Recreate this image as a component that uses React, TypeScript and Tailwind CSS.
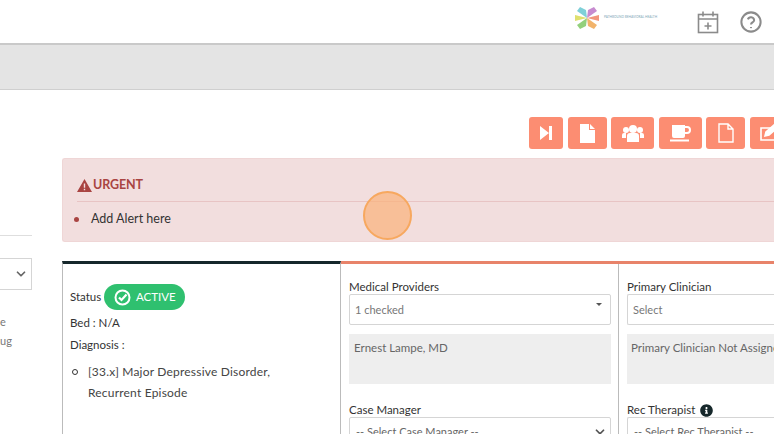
import { ChevronDown } from "lucide-react";
import { FaInfoCircle } from "react-icons/fa";

function Btn({ w, children }: { w: string; children: React.ReactNode }) {
  return <div className={`${w} h-[32px] shrink-0 rounded-[3px] bg-[#fc8d72] flex items-center justify-center`}>{children}</div>;
}

export default function App() {
  return (
    <div className="w-[774px] h-[434px] overflow-hidden bg-white font-['Lato','Liberation_Sans',sans-serif] text-[11.5px] text-[#333]">
      <header className="h-[45px] bg-white border-b-2 border-[#c9c9c9] flex items-center justify-end">
        <svg width="24" height="24" viewBox="0 0 24 24" className="mr-[5px] mb-[7px]">
          <path d="M12 12 L2 5 L5 1 L11 4Z" fill="#7fd0d8" />
          <path d="M12 12 L22 5 L19 1 L13 4Z" fill="#c78bd0" />
          <path d="M12 12 L0 9 L0 15Z" fill="#dfe06e" />
          <path d="M12 12 L24 9 L24 15Z" fill="#f2967d" />
          <path d="M12 12 L2 19 L5 23 L11 20Z" fill="#93d07c" />
          <path d="M12 12 L22 19 L19 23 L13 20Z" fill="#f2b36b" />
        </svg>
        <span className="w-[54px] mb-[7px] text-[3.2px] leading-none text-[#7fa8b8] whitespace-nowrap">PATHBOUND BEHAVIORAL HEALTH</span>
        <svg width="24" height="24" viewBox="0 0 24 24" fill="none" stroke="#8b8b8b" strokeWidth="1.6" className="ml-[38px]">
          <rect x="2.5" y="4.5" width="19" height="18" />
          <path d="M2.5 9h19M7 1.5v5M17 1.5v5M12 12.5v7M8.5 16h7" />
        </svg>
        <svg width="22" height="22" viewBox="0 0 24 24" fill="none" stroke="#8b8b8b" strokeWidth="2.2" className="ml-[20px] mr-[12px]">
          <circle cx="12" cy="12" r="10.5" />
          <path d="M8.6 9.2a3.5 3.5 0 0 1 6.8.8c0 2.3-3.4 2.6-3.4 4.6" />
          <path d="M12 17.5v1.2" />
        </svg>
      </header>
      <div className="h-[45px] bg-[#e4e4e4] border-b border-[#cfcfcf]" />
      <main className="relative flex">
        <aside className="w-[62px] shrink-0 pt-[145px]">
          <div className="w-[32px] border-t border-[#dedede]" />
          <div className="mt-[22px] w-[32px] h-[32px] border border-[#d5d5d5] border-l-0 flex items-center justify-end pr-[3px]">
            <ChevronDown size={14} strokeWidth={3} className="text-[#666]" />
          </div>
          <div className="mt-[22px] text-[11px] leading-[19px] text-[#777]">
            <div>e</div>
            <div>ug</div>
          </div>
        </aside>
        <div className="w-[712px] shrink-0">
          <div className="h-[68px] pt-[27px] flex gap-[4.5px] pl-[467px]">
            <Btn w="w-[34px]">
              <svg width="14" height="16" viewBox="0 0 14 16" fill="#fff"><path d="M1 1l9 7-9 7zM10 1h3v14h-3z" /></svg>
            </Btn>
            <Btn w="w-[39px]">
              <svg width="15" height="19" viewBox="0 0 15 19" fill="#fff"><path d="M0 0h9v6h6v13H0zM10 0l5 5h-5z" /></svg>
            </Btn>
            <Btn w="w-[43px]">
              <svg width="22" height="18" viewBox="0 0 22 18" fill="#fff">
                <circle cx="11" cy="5" r="4" /><circle cx="4" cy="6" r="3" /><circle cx="18" cy="6" r="3" />
                <path d="M5 18v-6a3 3 0 0 1 3-3h6a3 3 0 0 1 3 3v6zM0 14v-3a2 2 0 0 1 2-2h2v5zM22 14v-3a2 2 0 0 0-2-2h-2v5z" />
              </svg>
            </Btn>
            <Btn w="w-[43px]">
              <svg width="22" height="18" viewBox="0 0 22 18" fill="#fff">
                <path d="M3 1h13v1h2a4 4 0 0 1 0 8h-2v2a2 2 0 0 1-2 2H5a2 2 0 0 1-2-2zM16 4v4h2a2 2 0 0 0 0-4z" fillRule="evenodd" />
                <rect x="1" y="15.5" width="19" height="2" />
              </svg>
            </Btn>
            <Btn w="w-[39px]">
              <svg width="16" height="20" viewBox="0 0 16 20" fill="none" stroke="#fff" strokeWidth="1.4"><path d="M1 1h9l5 5v13H1zM10 1v5h5" /></svg>
            </Btn>
            <Btn w="w-[39px]">
              <svg width="20" height="18" viewBox="0 0 20 18" fill="none" stroke="#fff" strokeWidth="1.6"><path d="M16 12v4H2V4h11" /><path d="M6 12l1-4 8-7 3 3-8 7z" fill="#fff" /></svg>
            </Btn>
          </div>
          <section className="h-[84px] rounded-l-[3px] bg-[#f2dede] pl-[14px] pt-[17px] border border-r-0 border-[#efd6d6]">
            <div className="flex items-center gap-[1px] pb-[7px] border-b border-[#e8c4c4] text-[#a94442] font-bold text-[12.5px] leading-[18px] tracking-[-0.1px]">
              <svg width="15" height="13" viewBox="0 0 15 13" fill="#a94442"><path fillRule="evenodd" d="M7.5 0L15 13H0zM6.8 4.5v4.3h1.4V4.5zM6.8 9.8v1.4h1.4V9.8z" /></svg>
              URGENT
            </div>
            <div className="mt-[8px] flex items-center text-[12.5px] leading-[18px] text-[#333]">
              <span className="w-[5px] h-[5px] -ml-[3px] rounded-full bg-[#a94442]" />
              <span className="ml-[12px]">Add Alert here</span>
            </div>
          </section>
          <section className="mt-[19px] flex h-[200px]">
            <div className="w-[279px] shrink-0 border-t-[3px] border-x border-t-[#16282b] border-x-[#bbb] pl-[7px] pt-[20px]">
              <div className="flex items-center gap-[3px] h-[26px]">
                <span>Status</span>
                <span className="w-[81px] h-[26px] rounded-full bg-[#2fc06f] text-white flex items-center justify-center gap-[5px]">
                  <svg width="17" height="17" viewBox="0 0 17 17" fill="none">
                    <circle cx="8.5" cy="8.5" r="7" stroke="#fff" strokeWidth="2" />
                    <path d="M5 8.5l2.5 2.5 5-5.5" stroke="#fff" strokeWidth="2.2" />
                  </svg>
                  ACTIVE
                </span>
              </div>
              <div className="mt-[3px] leading-[20px] text-[11.5px]">Bed : N/A</div>
              <div className="mt-[2px] leading-[20px]">Diagnosis :</div>
              <div className="mt-[6px] flex text-[12px] leading-[21px] tracking-[0.2px] text-[#444]">
                <span className="mt-[8px] ml-[2px] w-[6px] h-[6px] rounded-full border border-[#333] shrink-0" />
                <span className="ml-[10px]">[33.x] Major Depressive Disorder,<br />Recurrent Episode</span>
              </div>
            </div>
            <div className="flex-1 border-t-[3px] border-t-[#e8836a] flex min-w-0">
              <div className="w-[278px] shrink-0 border-r border-[#bbb] pl-[8px] pr-[7px] pt-[15px]">
                <label className="block leading-[16px]">Medical Providers</label>
                <div className="mt-[-1px] h-[31px] border border-[#d5d5d5] rounded-[2px] pl-[5px] pr-[8px] pt-[7px] flex items-start justify-between text-[#777] text-[11px] leading-[16px]">
                  1 checked
                  <span className="mt-[1px] border-x-[3px] border-x-transparent border-t-[3px] border-t-[#555]" />
                </div>
                <div className="mt-[9px] h-[50px] bg-[#eee] pl-[5px] pt-[6px] text-[#666] leading-[16px]">Ernest Lampe, MD</div>
                <label className="block mt-[18px] leading-[16px]">Case Manager</label>
                <div className="mt-[-1px] h-[31px] border border-[#d5d5d5] rounded-[2px] pl-[6px] pr-[3px] flex items-start pt-[6px] justify-between text-[#666] text-[11px] leading-[16px]">
                  <span className="whitespace-pre">-- Select Case Manager --</span>
                  <ChevronDown size={14} strokeWidth={3} className="text-[#555] mt-[1px]" />
                </div>
              </div>
              <div className="w-[156px] shrink-0 pl-[8px] pt-[15px] overflow-hidden">
                <label className="block leading-[16px]">Primary Clinician</label>
                <div className="mt-[-1px] h-[31px] border border-r-0 border-[#d5d5d5] rounded-l-[2px] pl-[5px] pt-[7px] text-[#777] text-[11px] leading-[16px]">Select</div>
                <div className="mt-[9px] h-[50px] bg-[#eee] pl-[4px] pt-[6px] text-[#666] leading-[16px] whitespace-nowrap">Primary Clinician Not Assigned</div>
                <label className="flex items-center gap-[5px] mt-[18px] leading-[16px]">Rec Therapist <FaInfoCircle size={13} className="text-[#16282b]" /></label>
                <div className="mt-[-1px] h-[31px] border border-r-0 border-[#d5d5d5] rounded-l-[2px] pl-[6px] pt-[6px] text-[#666] text-[11px] leading-[16px] whitespace-pre">-- Select Rec Therapist --</div>
              </div>
            </div>
          </section>
        </div>
        <div className="absolute left-[363px] top-[101px] w-[49px] h-[49px] rounded-full bg-[#fbb27b]/70 border-2 border-[#f7a85f]" />
      </main>
    </div>
  );
}
